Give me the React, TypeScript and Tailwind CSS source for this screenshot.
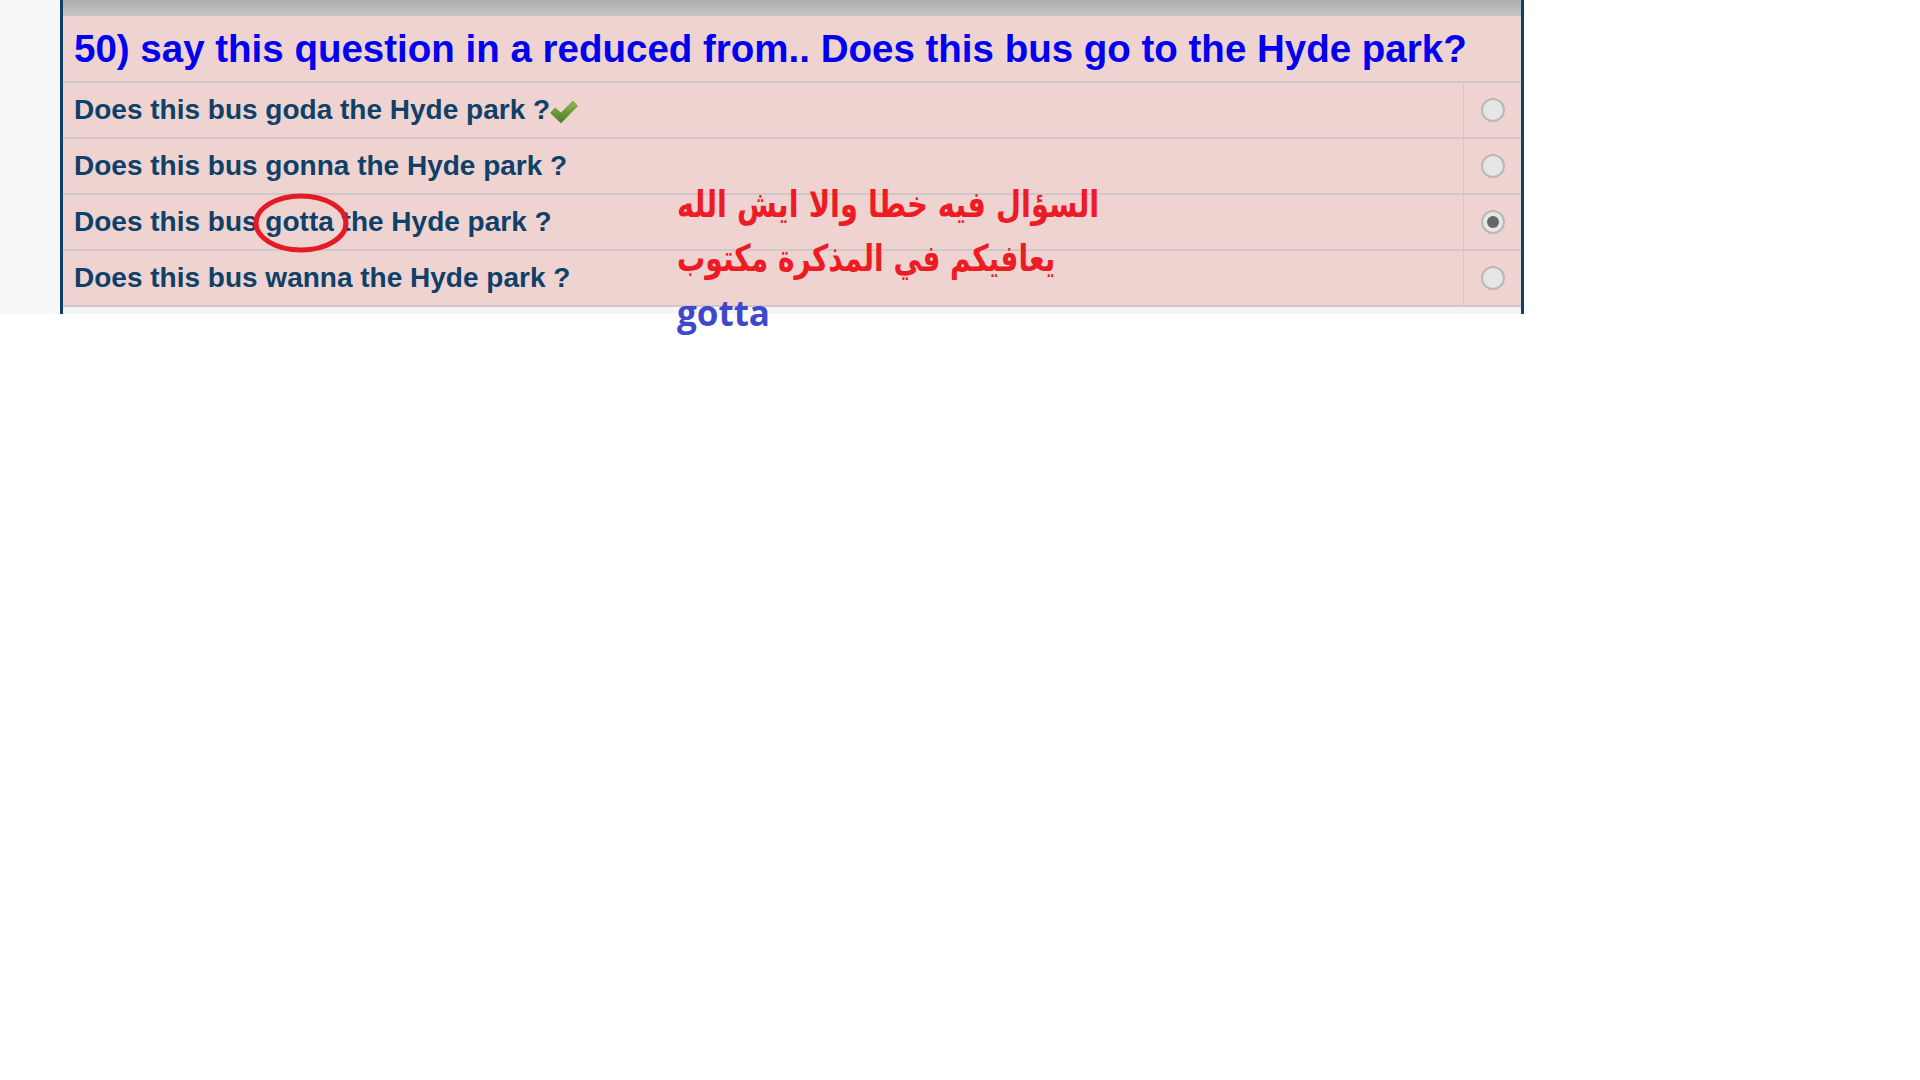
const OPTIONS = [
  "Does this bus goda the Hyde park ?",
  "Does this bus gonna the Hyde park ?",
  "Does this bus gotta the Hyde park ?",
  "Does this bus wanna the Hyde park ?",
];

function CheckMark() {
  return (
    <svg width="28" height="24" viewBox="0 0 28 24" className="mt-[3px] shrink-0">
      <defs>
        <linearGradient id="tick" x1="0" y1="0" x2="0" y2="1">
          <stop offset="0" stopColor="#8fbf4a" />
          <stop offset="1" stopColor="#4a7a24" />
        </linearGradient>
      </defs>
      <path d="M0.5 13 L5 8 L11 13 L23 1 L27.5 6 L11 23 Z" fill="url(#tick)" stroke="#55772f" strokeWidth="0.5" />
    </svg>
  );
}

function Radio({ checked }: { checked: boolean }) {
  return (
    <span className="flex h-6 w-6 items-center justify-center rounded-full border-2 border-[#b8b8b8] bg-[#e6e6e6]">
      {checked && <span className="h-3 w-3 rounded-full bg-[#666666]" />}
    </span>
  );
}

export default function App() {
  return (
    <div className="relative min-h-[1080px] bg-white font-['Liberation_Sans',Arial,sans-serif]">
      <div className="h-[314px] w-[1524px] bg-[#f7f7f7] pl-[60px]">
        <div className="flex h-full flex-col border-x-[3px] border-[#0f4068] bg-[#f5f5f7]">
          <div className="h-4 bg-gradient-to-b from-[#aeaeae] to-[#c6c6c6]" />
          <div className="flex h-[67px] items-center border-b-2 border-[#d0c8c8] bg-[#eed3d1] pl-[11px] pt-[2px] text-[38.5px] font-bold leading-none text-[#0000ee]">
            50) say this question in a reduced from.. Does this bus go to the Hyde park?
          </div>
          {OPTIONS.map((label, i) => (
            <div key={label} className="flex h-14 border-b-2 border-[#d0c8c8] bg-[#eed3d1]">
              <div className="flex flex-1 items-center pl-[11px] text-[28px] font-bold text-[#0f4068]">
                {label}
                {i === 0 && <CheckMark />}
              </div>
              <div className="flex w-[58px] items-center justify-center border-l border-[#d0c8c8] pl-[1px]">
                <Radio checked={i === 2} />
              </div>
            </div>
          ))}
        </div>
      </div>

      {/* ellipse drawn on top of the screenshot */}
      <svg width="100" height="62" viewBox="0 0 100 62" className="absolute left-[252px] top-[192px]">
        <ellipse cx="49" cy="31" rx="45" ry="27" fill="none" stroke="#e31b25" strokeWidth="5" />
      </svg>

      {/* note pasted over the question, DejaVu is wide so the lines are squeezed */}
      <div className="absolute left-[677px] top-[178px] flex flex-col items-start whitespace-nowrap font-['DejaVu_Sans',sans-serif] text-[37px] font-bold leading-[54px] text-[#ed1c24]">
        <div dir="rtl" className="origin-left scale-x-[0.78]">السؤال فيه خطا والا ايش الله</div>
        <div dir="rtl" className="origin-left scale-x-[0.76]">يعافيكم في المذكرة مكتوب</div>
        <div className="font-['Open_Sans',sans-serif] text-[35px] text-[#3f48cc]">gotta</div>
      </div>
    </div>
  );
}
